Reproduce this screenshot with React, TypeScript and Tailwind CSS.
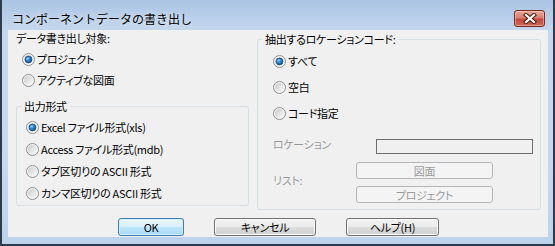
const FONT = "font-['Noto_Sans_CJK_JP',sans-serif]";

function Radio({ checked }: { checked?: boolean }) {
  return (
    <svg width="13" height="13" viewBox="0 0 13 13" className="shrink-0">
      <defs>
        <linearGradient id="radio-well" x1="0" y1="0" x2="1" y2="1">
          <stop offset="0" stopColor="#c9c9c9" />
          <stop offset="1" stopColor="#fdfdfd" />
        </linearGradient>
        <radialGradient id="radio-dot" cx="0.38" cy="0.35" r="0.7">
          <stop offset="0" stopColor="#8fd2fb" />
          <stop offset="0.45" stopColor="#2a8ad8" />
          <stop offset="1" stopColor="#0c4d8f" />
        </radialGradient>
      </defs>
      <circle cx="6.5" cy="6.5" r="6" fill="#f6f6f6" stroke="#8e8f8f" />
      <circle cx="6.5" cy="6.5" r="4.6" fill="url(#radio-well)" />
      {checked && <circle cx="6.5" cy="6.5" r="3.4" fill="url(#radio-dot)" stroke="#163f6b" strokeWidth="0.7" />}
    </svg>
  );
}

function Option({ label, checked, className = '' }: { label: string; checked?: boolean; className?: string }) {
  return (
    <div className={`flex h-[14px] items-center gap-[2px] ${className}`}>
      <Radio checked={checked} />
      <span className="whitespace-nowrap">{label}</span>
    </div>
  );
}

function GroupBox({ title, className = '', children }: { title: string; className?: string; children: React.ReactNode }) {
  return (
    <div className={`relative rounded-[3px] border border-[#d5dfe5] ${className}`}>
      <span className="absolute -top-[8px] left-[4px] h-[14px] bg-[#f0f0f0] px-[3px] leading-[14px] whitespace-nowrap">
        {title}
      </span>
      {children}
    </div>
  );
}

function CloseButton() {
  return (
    <div className="flex h-[17px] w-[31px] items-center justify-center rounded-[3px] border border-[#7b2a20] bg-[linear-gradient(#e8aa9c,#d67f6c_45%,#c4473a_55%,#cf6a58)] shadow-[inset_0_0_0_1px_rgba(255,220,210,0.45)]">
      <svg width="14" height="11" viewBox="0 0 14 11">
        <path d="M3 2 L11 9 M11 2 L3 9" stroke="#4a1810" strokeWidth="4.2" strokeLinecap="square" />
        <path d="M3 2 L11 9 M11 2 L3 9" stroke="#ffffff" strokeWidth="2.2" strokeLinecap="square" />
      </svg>
    </div>
  );
}

export default function App() {
  return (
    <div
      className={`flex h-[246px] w-[555px] flex-col border-b-2 border-l-2 border-r-2 border-[#2f3b4a] bg-[linear-gradient(180deg,#a9c4e3_0px,#c3d7ed_30px,#c6daef_60%,#bcd3eb)] pb-[7px] pl-[6px] pr-[5px] text-[11px] leading-[14px] text-black ${FONT}`}
    >
      <div className="flex h-[30px] items-center justify-between pl-[4px] pr-[3px] pt-[7px]">
        <span className="text-[12px] leading-[16px] [text-shadow:0_0_6px_rgba(255,255,255,0.9)]">
          コンポーネントデータの書き出し
        </span>
        <CloseButton />
      </div>

      <div className="flex flex-1 flex-col bg-[#f0f0f0] pl-[8px] pr-[7px] tracking-[-0.3px] [font-feature-settings:'palt']">
        <div className="flex items-start gap-[8px]">
          <div className="flex w-[233px] flex-col pt-[1px]">
            <span className="h-[14px] whitespace-nowrap">データ書き出し対象:</span>
            <Option label="プロジェクト" checked className="mt-[7px] pl-[6px]" />
            <Option label="アクティブな図面" className="mt-[7px] pl-[6px]" />

            <GroupBox title="出力形式" className="mt-[19px] flex flex-col gap-[8px] pb-[5px] pl-[9px] pt-[13px]">
              <Option label="Excel ファイル形式(xls)" checked />
              <Option label="Access ファイル形式(mdb)" />
              <Option label="タブ区切りの ASCII 形式" />
              <Option label="カンマ区切りの ASCII 形式" />
            </GroupBox>
          </div>

          <GroupBox title="抽出するロケーションコード:" className="mt-[9px] flex w-[284px] flex-col pb-[6px] pl-[15px] pr-[7px] pt-[14px]">
            <div className="flex flex-col gap-[12px]">
              <Option label="すべて" checked />
              <Option label="空白" />
              <Option label="コード指定" />
            </div>

            <div className="mt-[17px] flex items-center justify-between text-[#9a9a9a]">
              <span className="mb-[5px]">ロケーション</span>
              <div className="h-[15px] w-[157px] border border-[#6d6d6d] bg-[#f0f0f0]" />
            </div>

            <div className="mt-[6px] flex items-center text-[#9a9a9a]">
              <span className="mb-[5px] w-[83px]">リスト:</span>
              <div className="flex flex-col gap-[7px]">
                <div className="flex h-[17px] w-[137px] items-center justify-center rounded-[3px] border border-[#b3b7ba] bg-[#f4f4f4]">
                  図面
                </div>
                <div className="flex h-[17px] w-[137px] items-center justify-center rounded-[3px] border border-[#b3b7ba] bg-[#f4f4f4]">
                  プロジェクト
                </div>
              </div>
            </div>
          </GroupBox>
        </div>

        <div className="mt-[8px] flex justify-center gap-[30px]">
          <button className="flex h-[18px] w-[66px] items-center justify-center rounded-[3px] border border-[#3c7fb1] bg-[linear-gradient(#eaf6fd,#d9f0fc_50%,#bee6fd_50%,#a7d9f5)] shadow-[inset_0_0_0_1px_#d6eefc]">
            OK
          </button>
          <button className="flex h-[18px] w-[102px] items-center justify-center rounded-[3px] border border-[#707070] bg-[linear-gradient(#f2f2f2,#ebebeb_50%,#dddddd_50%,#cfcfcf)] shadow-[inset_0_0_0_1px_#fcfcfc]">
            キャンセル
          </button>
          <button className="flex h-[18px] w-[93px] items-center justify-center rounded-[3px] border border-[#707070] bg-[linear-gradient(#f2f2f2,#ebebeb_50%,#dddddd_50%,#cfcfcf)] shadow-[inset_0_0_0_1px_#fcfcfc]">
            ヘルプ(H)
          </button>
        </div>
      </div>
    </div>
  );
}
